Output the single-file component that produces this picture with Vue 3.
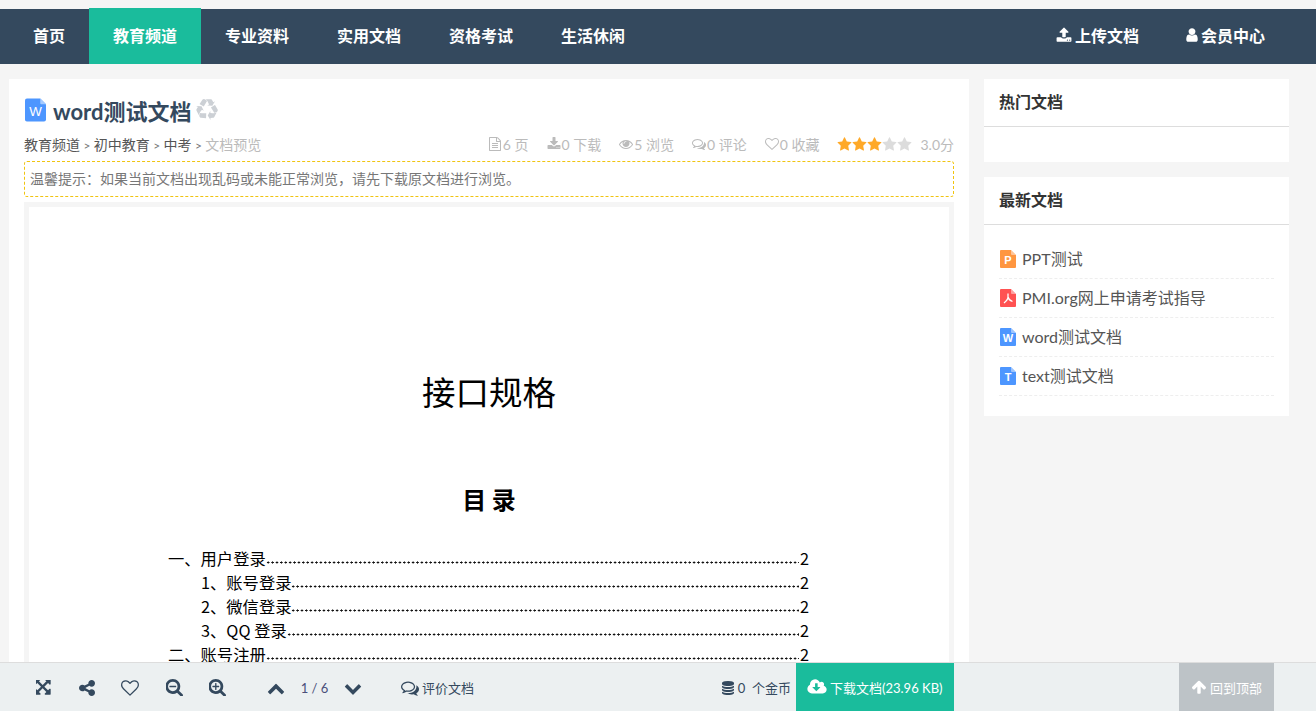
<template>
  <div class="page">
    <nav class="topnav">
      <a v-for="item in navItems" :key="item" class="nav-item" :class="{ 'is-active': item === '教育频道' }">{{ item }}</a>
      <a class="nav-item nav-right">
        <svg class="nav-icon" viewBox="0 0 1792 1792"><path :d="fa.upload" /></svg>上传文档
      </a>
      <a class="nav-item">
        <svg class="nav-icon user" viewBox="256 0 1280 1792"><path :d="fa.user" /></svg>会员中心
      </a>
    </nav>

    <div class="content">
      <main class="main-card">
        <h1 class="doc-title">
          <svg class="title-icon" viewBox="0 0 22 24">
            <path d="M2 0H16L22 6V22A2 2 0 0 1 20 24H2A2 2 0 0 1 0 22V2A2 2 0 0 1 2 0Z" fill="#4d96ff" />
            <path d="M16 0 22 6H17A1 1 0 0 1 16 5Z" fill="#a6cbff" />
            <text x="11" y="18" text-anchor="middle" class="title-letter">W</text>
          </svg>
          <span>word测试文档</span>
          <svg class="recycle" viewBox="0 0 1792 1792" fill="#ccd0d5"><path :d="fa.recycle" /></svg>
        </h1>

        <div class="meta-row">
          <div class="crumbs">
            <span>教育频道</span><i>&gt;</i><span>初中教育</span><i>&gt;</i><span>中考</span><i>&gt;</i><span class="crumb-current">文档预览</span>
          </div>
          <div class="stats">
            <span v-for="stat in stats" :key="stat.label" class="stat">
              <svg class="stat-icon" viewBox="0 0 1792 1792"><path :d="fa[stat.icon]" /></svg>{{ stat.label }}
            </span>
            <span class="stars">
              <svg v-for="n in 5" :key="n" class="star" viewBox="0 0 1792 1792" :fill="n <= 3 ? '#ffa928' : '#dcdcdc'"><path :d="fa.star" /></svg>
            </span>
            <span class="score">3.0分</span>
          </div>
        </div>

        <div class="notice">温馨提示：如果当前文档出现乱码或未能正常浏览，请先下载原文档进行浏览。</div>

        <div class="viewer">
          <div class="sheet">
            <div class="sheet-title">接口规格</div>
            <div class="sheet-sub">目 录</div>
            <div class="toc">
              <div v-for="row in tocRows" :key="row.text" class="toc-row" :class="{ 'is-child': row.child }">
                <span>{{ row.text }}</span>
                <span class="leader"></span>
                <span>2</span>
              </div>
            </div>
          </div>
        </div>
      </main>

      <aside class="sidebar">
        <section class="side-card">
          <h3 class="side-head">热门文档</h3>
          <div class="side-empty"></div>
        </section>
        <section class="side-card">
          <h3 class="side-head">最新文档</h3>
          <ul class="side-list">
            <li v-for="doc in latestDocs" :key="doc.name" class="side-item">
              <svg class="file-icon" viewBox="0 0 16 18">
                <path d="M1 0H11L16 5V17A1 1 0 0 1 15 18H1A1 1 0 0 1 0 17V1A1 1 0 0 1 1 0Z" :fill="doc.color" />
                <path d="M11 0 16 5H12A1 1 0 0 1 11 4Z" fill="#fff" fill-opacity=".45" />
                <path v-if="doc.letter === ''" d="M8 4.500V8C8 10 6.500 12 4 14M8 8C8.500 10.500 10 11.500 12.500 12.500" fill="none" stroke="#fff" stroke-width="1.300" />
                <text v-else x="8" y="13.500" text-anchor="middle" class="file-letter">{{ doc.letter }}</text>
              </svg>
              <span>{{ doc.name }}</span>
            </li>
          </ul>
        </section>
      </aside>
    </div>

    <footer class="toolbar">
      <div class="tool-icons">
        <svg v-for="tool in toolIcons" :key="tool.name" class="tool" :style="{ width: tool.size + 'px', height: tool.size + 'px' }" :viewBox="tool.box"><path :d="fa[tool.name]" /></svg>
      </div>
      <div class="pager">
        <svg class="tool" viewBox="0 0 1792 1792"><path :d="fa.chevronUp" /></svg>
        <span class="page-num">1 / 6</span>
        <svg class="tool" viewBox="0 0 1792 1792"><path :d="fa.chevronDown" /></svg>
      </div>
      <a class="rate">
        <svg class="tool" viewBox="0 0 1792 1792"><path :d="fa.comments" /></svg>评价文档
      </a>
      <div class="coins">
        <svg class="coin-icon" viewBox="128 128 1536 1536"><path :d="fa.database" /></svg>
        <span>0 &nbsp;个金币</span>
      </div>
      <a class="download-btn">
        <svg class="cloud" viewBox="0 0 1920 1792"><path :d="fa.cloudDownload" /></svg>下载文档(23.96 KB)
      </a>
      <a class="top-btn">
        <svg class="arrow-up" viewBox="0 0 1792 1792"><path :d="fa.arrowUp" /></svg>回到顶部
      </a>
    </footer>
  </div>
</template>

<script setup>
const navItems = ['首页', '教育频道', '专业资料', '实用文档', '资格考试', '生活休闲']

const stats = [
  { icon: 'file', label: '6 页' },
  { icon: 'download', label: '0 下载' },
  { icon: 'eye', label: '5 浏览' },
  { icon: 'comments', label: '0 评论' },
  { icon: 'heart', label: '0 收藏' }
]

const tocRows = [
  { text: '一、用户登录' },
  { text: '1、账号登录', child: true },
  { text: '2、微信登录', child: true },
  { text: '3、QQ 登录', child: true },
  { text: '二、账号注册' }
]

const latestDocs = [
  { name: 'PPT测试', letter: 'P', color: '#ff9640' },
  { name: 'PMI.org网上申请考试指导', letter: '', color: '#ff5252' },
  { name: 'word测试文档', letter: 'W', color: '#4d96ff' },
  { name: 'text测试文档', letter: 'T', color: '#4d96ff' }
]

// boxes are cropped to each glyph so the gaps between icons come out even
const toolIcons = [
  { name: 'arrowsAlt', box: '128 128 1536 1536', size: 16 },
  { name: 'shareAlt', box: '128 128 1536 1536', size: 16 },
  { name: 'heart', box: '0 0 1792 1792', size: 18 },
  { name: 'searchMinus', box: '128 128 1600 1600', size: 17 },
  { name: 'searchPlus', box: '128 128 1600 1600', size: 17 }
]

const searchRing = 'zm128 32q0-185-131.500-316.500t-316.500-131.500-316.500 131.500-131.500 316.500 131.500 316.500 316.500 131.500 316.500-131.500 131.500-316.500zm512 832q0 53-37.500 90.500t-90.500 37.500q-54 0-90-38l-343-342q-179 124-399 124-143 0-273.500-55.500t-225-150-150-225-55.500-273.500 55.500-273.500 150-225 225-150 273.500-55.500 273.500 55.500 225 150 150 225 55.500 273.500q0 220-124 399l343 343q37 37 37 90z'

const fa = {
  upload: 'M1344 1472q0-26-19-45t-45-19-45 19-19 45 19 45 45 19 45-19 19-45zm256 0q0-26-19-45t-45-19-45 19-19 45 19 45 45 19 45-19 19-45zm128-224v320q0 40-28 68t-68 28h-1472q-40 0-68-28t-28-68v-320q0-40 28-68t68-28h427q21 56 70.500 92t110.500 36h256q61 0 110.500-36t70.500-92h427q40 0 68 28t28 68zm-325-648q-17 40-59 40h-256v448q0 26-19 45t-45 19h-256q-26 0-45-19t-19-45v-448h-256q-42 0-59-40-17-39 14-69l448-448q18-19 45-19t45 19l448 448q31 30 14 69z',
  user: 'M1536 1399q0 109-62.500 187t-150.500 78h-854q-88 0-150.500-78t-62.500-187q0-85 8.500-160.500t31.500-152 58.500-131 94-89 134.500-34.500q131 128 313 128t313-128q76 0 134.500 34.500t94 89 58.500 131 31.500 152 8.500 160.500zm-256-887q0 159-112.500 271.500t-271.500 112.500-271.500-112.500-112.500-271.500 112.500-271.500 271.500-112.500 271.500 112.500 112.500 271.500z',
  recycle: 'M836 1169l-15 368-2 22-420-29q-36-3-67-31.500t-47-65.500q-11-27-14.500-55t4-65 12-55 21.500-64 19-53q78 12 509 28zm-387-586l180 379-147-92q-63 72-111.500 144.500t-72.500 125-39.500 94.500-18.500 63l-4 21-190-357q-17-26-18-56t6-47l8-18q35-63 114-188l-140-86zm1231 517l-188 359q-12 29-36.500 46.500t-43.500 20.500l-18 4q-71 7-219 12l8 164-230-367 211-362 7 173q170 16 283 5t170-33zm-785-924q-47 63-265 435l-317-187-19-12 225-356q20-31 60-45t80-10q24 2 48.500 12t42 21 41.500 33 36 34.500 36 39.500 32 35zm655 307l212 363q18 37 12.500 76t-27.500 74q-13 20-33 37t-38 28-48.500 22-47 16-51.500 14-46 12q-34-72-265-436l313-195zm-143-226l142-83-220 373-419-20 151-86q-34-89-75-166t-75.500-123.500-64.500-80-47-46.500l-17-13 405 1q31-3 58 10.500t39 28.500l11 15q39 61 112 190z',
  file: 'M1596 380q28 28 48 76t20 88v1152q0 40-28 68t-68 28h-1344q-40 0-68-28t-28-68v-1600q0-40 28-68t68-28h896q40 0 88 20t76 48zm-444-244v376h376q-10-29-22-41l-313-313q-12-12-41-22zm384 1528v-1024h-416q-40 0-68-28t-28-68v-416h-768v1536h1280zm-1024-864q0-14 9-23t23-9h704q14 0 23 9t9 23v64q0 14-9 23t-23 9h-704q-14 0-23-9t-9-23v-64zm736 224q14 0 23 9t9 23v64q0 14-9 23t-23 9h-704q-14 0-23-9t-9-23v-64q0-14 9-23t23-9h704zm0 256q14 0 23 9t9 23v64q0 14-9 23t-23 9h-704q-14 0-23-9t-9-23v-64q0-14 9-23t23-9h704z',
  download: 'M1344 1344q0-26-19-45t-45-19-45 19-19 45 19 45 45 19 45-19 19-45zm256 0q0-26-19-45t-45-19-45 19-19 45 19 45 45 19 45-19 19-45zm128-224v320q0 40-28 68t-68 28h-1472q-40 0-68-28t-28-68v-320q0-40 28-68t68-28h465l135 136q58 56 136 56t136-56l136-136h464q40 0 68 28t28 68zm-325-569q17 41-14 70l-448 448q-18 19-45 19t-45-19l-448-448q-31-29-14-70 17-39 59-39h256v-448q0-26 19-45t45-19h256q26 0 45 19t19 45v448h256q42 0 59 39z',
  eye: 'M1664 960q-152-236-381-353 61 104 61 225 0 185-131.500 316.500t-316.500 131.500-316.500-131.500-131.500-316.500q0-121 61-225-229 117-381 353 133 205 333.500 326.500t434.500 121.500 434.500-121.500 333.500-326.500zm-720-384q0-20-14-34t-34-14q-125 0-214.500 89.500t-89.500 214.500q0 20 14 34t34 14 34-14 14-34q0-86 61-147t147-61q20 0 34-14t14-34zm848 384q0 34-20 69-140 230-376.500 368.500t-499.500 138.500-499.500-139-376.500-368q-20-35-20-69t20-69q140-229 376.500-368t499.500-139 499.500 139 376.500 368q20 35 20 69z',
  comments: 'M704 384q-153 0-286 52t-211.500 141-78.500 191q0 82 53 158t149 132l97 56-35 84q34-20 62-39l44-31 53 10q78 14 153 14 153 0 286-52t211.500-141 78.500-191-78.500-191-211.500-141-286-52zm0-128q191 0 353.500 68.500t256.500 186.500 94 257-94 257-256.500 186.500-353.500 68.500q-86 0-176-16-124 88-278 128-36 9-86 16h-3q-11 0-20.500-8t-11.500-21q-1-3-1-6.500t.5-6.500 2-6l2.500-5 3.500-5.500 4-5 4.500-5 4-4.500q5-6 23-25t26-29.500 22.500-29 25-38.500 20.500-44q-124-72-195-177t-71-224q0-139 94-257t256.500-186.500 353.500-68.500zm822 1169q10 24 20.500 44t25 38.500 22.500 29 26 29.500 23 25q1 1 4 4.500t4.500 5 4 5 3.500 5.500l2.500 5 2 6 .5 6.500-1 6.500q-3 14-13 22t-22 7q-50-7-86-16-154-40-278-128-90 16-176 16-271 0-472-132 58 4 88 4 161 0 309-45t264-129q125-92 192-212t67-254q0-77-23-152 129 71 204 178t75 230q0 120-71 224.500t-195 176.500z',
  heart: 'M1664 596q0-81-21.500-143t-55-98.500-81.500-59.500-94-31-98-8-112 25.500-110.500 64-86.500 72-60 61.500q-18 22-49 22t-49-22q-24-28-60-61.500t-86.500-72-110.500-64-112-25.500-98 8-94 31-81.500 59.500-55 98.500-21.500 143q0 168 187 355l581 560 580-559q188-188 188-356zm128 0q0 221-229 450l-623 600q-18 18-44 18t-44-18l-624-601q-10-8-27.500-26t-55.500-65.500-68-97.500-53.500-121-23.500-138q0-220 127-344t351-124q62 0 126.500 21.500t120 58 95.500 68.500 76 68q36-36 76-68t95.500-68.500 120-58 126.500-21.500q224 0 351 124t127 344z',
  star: 'M1728 647q0 22-26 48l-363 354 86 500q1 7 1 20 0 21-10.500 35.500t-30.500 14.500q-19 0-40-12l-449-236-449 236q-22 12-40 12-21 0-31.500-14.500t-10.500-35.500q0-6 2-20l86-500-364-354q-25-27-25-48 0-37 56-46l502-73 225-455q19-41 49-41t49 41l225 455 502 73q56 9 56 46z',
  arrowsAlt: 'M1283 413l-355 355 355 355 144-144q29-31 70-14 39 17 39 59v448q0 26-19 45t-45 19h-448q-42 0-59-40-17-39 14-69l144-144-355-355-355 355 144 144q31 30 14 69-17 40-59 40h-448q-26 0-45-19t-19-45v-448q0-42 40-59 39-17 69 14l144 144 355-355-355-355-144 144q-19 19-45 19-12 0-24-5-40-17-40-59v-448q0-26 19-45t45-19h448q42 0 59 40 17 39-14 69l-144 144 355 355 355-355-144-144q-31-30-14-69 17-40 59-40h448q26 0 45 19t19 45v448q0 42-39 59-13 5-25 5-26 0-45-19z',
  shareAlt: 'M1344 1024q133 0 226.500 93.500t93.500 226.500-93.500 226.500-226.500 93.500-226.500-93.500-93.500-226.500q0-12 2-34l-360-180q-92 86-218 86-133 0-226.500-93.500t-93.500-226.500 93.500-226.500 226.500-93.500q126 0 218 86l360-180q-2-22-2-34 0-133 93.500-226.500t226.500-93.500 226.500 93.500 93.500 226.500-93.500 226.500-226.500 93.500q-126 0-218-86l-360 180q2 22 2 34t-2 34l360 180q92-86 218-86z',
  searchMinus: 'M1088 800v64q0 13-9.500 22.500t-22.500 9.500h-576q-13 0-22.500-9.500t-9.500-22.500v-64q0-13 9.500-22.500t22.500-9.500h576q13 0 22.500 9.500t9.500 22.500' + searchRing,
  searchPlus: 'M1088 800v64q0 13-9.500 22.500t-22.500 9.500h-224v224q0 13-9.500 22.500t-22.500 9.500h-64q-13 0-22.500-9.500t-9.500-22.500v-224h-224q-13 0-22.500-9.500t-9.500-22.500v-64q0-13 9.500-22.500t22.500-9.500h224v-224q0-13 9.500-22.500t22.500-9.500h64q13 0 22.500 9.500t9.500 22.500v224h224q13 0 22.500 9.500t9.500 22.500' + searchRing,
  chevronUp: 'M1683 1331l-166 165q-19 19-45 19t-45-19l-531-531-531 531q-19 19-45 19t-45-19l-166-165q-19-19-19-45.500t19-45.500l742-741q19-19 45-19t45 19l742 741q19 19 19 45.500t-19 45.500z',
  chevronDown: 'M1683 808l-742 741q-19 19-45 19t-45-19l-742-741q-19-19-19-45.500t19-45.500l166-165q19-19 45-19t45 19l531 531 531-531q19-19 45-19t45 19l166 165q19 19 19 45.500t-19 45.500z',
  database: 'M896 768q237 0 443-43t325-127v170q0 69-103 128t-280 93.500-385 34.500-385-34.500-280-93.500-103-128v-170q119 84 325 127t443 43zm0 768q237 0 443-43t325-127v170q0 69-103 128t-280 93.500-385 34.500-385-34.500-280-93.500-103-128v-170q119 84 325 127t443 43zm0-384q237 0 443-43t325-127v170q0 69-103 128t-280 93.500-385 34.500-385-34.500-280-93.500-103-128v-170q119 84 325 127t443 43zm0-1152q208 0 385 34.500t280 93.500 103 128v128q0 69-103 128t-280 93.500-385 34.500-385-34.500-280-93.500-103-128v-128q0-69 103-128t280-93.500 385-34.500z',
  cloudDownload: 'M1280 928q0-14-9-23t-23-9h-224v-352q0-13-9.500-22.500t-22.500-9.500h-192q-13 0-22.500 9.500t-9.500 22.500v352h-224q-13 0-22.500 9.500t-9.500 22.500q0 14 9 23l352 352q9 9 23 9t23-9l351-351q10-12 10-24zm640 224q0 159-112.500 271.500t-271.500 112.500h-1088q-185 0-316.500-131.500t-131.500-316.500q0-130 70-240t188-165q-2-30-2-43 0-212 150-362t362-150q156 0 285.500 87t188.500 231q71-62 166-62 106 0 181 75t75 181q0 76-41 138 130 31 213.500 135.500t83.500 238.500z',
  arrowUp: 'M1675 971q0 51-37 90l-75 75q-38 38-91 38-54 0-90-38l-294-293v704q0 52-37.500 84.500t-90.500 32.500h-128q-53 0-90.500-32.500t-37.500-84.500v-704l-294 293q-36 38-90 38t-90-38l-75-75q-38-38-38-90 0-53 38-91l651-651q35-37 90-37 54 0 91 37l651 651q37 39 37 91z'
}
</script>

<style>
html,
body {
  margin: 0;
  background: #f5f5f5;
}
</style>

<style scoped>
.page {
  display: flex;
  flex-direction: column;
  height: 100vh;
  overflow: hidden;
  font-family: Lato, "Noto Sans CJK SC", sans-serif;
  font-size: 14px;
  color: #555;
  background: #f5f5f5;
}

/* top bar */
.topnav {
  display: flex;
  flex: 0 0 auto;
  height: 55px;
  margin-top: 9px;
  padding: 0 27px 0 9px;
  background: #34495e;
}

.nav-item {
  display: flex;
  align-items: center;
  box-sizing: border-box;
  height: 55px;
  padding: 0 24px 3px;
  font-size: 16px;
  font-weight: 700;
  color: #fff;
}

.nav-item.is-active {
  height: 56px;
  margin-top: -1px;
  background: #1abc9c;
}

.nav-right {
  margin-left: auto;
  margin-right: -1px;
}

.nav-icon {
  width: 16px;
  height: 16px;
  margin-right: 3px;
  fill: #fff;
}
.nav-icon.user {
  width: 12px;
}

.content {
  display: flex;
  flex: 1 1 0;
  align-items: flex-start;
  gap: 15px;
  min-height: 0;
  padding: 15px 27px 0 9px;
  overflow: hidden;
}

/* main column */
.main-card {
  flex: 0 0 960px;
  box-sizing: border-box;
  padding: 14px 15px 0;
  background: #fff;
}

.doc-title {
  display: flex;
  align-items: center;
  height: 34px;
  margin: 0;
  font-size: 22px;
  font-weight: 700;
  color: #34495e;
}

.title-icon {
  width: 21px;
  height: 24px;
  margin: 0 7px 0 1px;
}

.title-letter {
  fill: #fff;
  font-family: "Liberation Sans", sans-serif;
  font-size: 14px;
  font-weight: 400;
}

.recycle {
  width: 22px;
  height: 22px;
  margin-left: 4px;
}

.meta-row {
  display: flex;
  justify-content: space-between;
  align-items: center;
  height: 20px;
  margin-top: 7px;
}

.crumbs i {
  margin: 0 3.400px;
  font-style: normal;
  font-size: 12px;
  color: #777;
}
.crumb-current {
  color: #bbb;
}

.stats {
  display: flex;
  align-items: center;
  color: #bbb;
}

.stat {
  display: flex;
  align-items: center;
  margin-right: 18px;
}

.stat-icon {
  width: 14px;
  height: 14px;
  margin-right: 1px;
  fill: #bbb;
}

.stars {
  display: flex;
}
.star {
  width: 15px;
  height: 15px;
}

.score {
  margin-left: 8px;
}

.notice {
  box-sizing: border-box;
  height: 36px;
  margin-top: 7px;
  padding: 0 5px;
  line-height: 34px;
  border: 1px dashed #f1c40f;
  border-radius: 3px;
  color: #777;
}

.viewer {
  margin-top: 5px;
  padding: 5px 5px 0;
  background: #f5f5f5;
}

.sheet {
  height: 560px;
  background: #fff;
  color: #000;
  font-family: "Noto Sans CJK SC", sans-serif;
  text-align: center;
}

.sheet-title {
  padding-top: 159px;
  font-size: 33.500px;
  line-height: 50px;
}

.sheet-sub {
  margin-top: 65px;
  font-size: 24px;
  font-weight: 700;
  line-height: 36px;
}

.toc {
  width: 641px;
  margin: 29px 0 0 139px;
  font-size: 16.300px;
  text-align: left;
}

.toc-row {
  display: flex;
  height: 24px;
  line-height: 24px;
  white-space: nowrap;
}
.toc-row.is-child {
  padding-left: 33px;
}

/* dot leader between a heading and its page number */
.leader {
  flex: 1 1 0;
  min-width: 0;
  height: 3px;
  margin: 15px 1px 0 0;
  background-image: radial-gradient(circle, #111 0.9px, transparent 1.200px);
  background-size: 4.400px 3px;
}

/* sidebar */
.sidebar {
  display: flex;
  flex: 0 0 305px;
  flex-direction: column;
  gap: 15px;
}

.side-card {
  background: #fff;
}

.side-head {
  height: 47px;
  margin: 0;
  padding: 0 15px;
  font-size: 16px;
  font-weight: 700;
  line-height: 46px;
  color: #333;
  border-bottom: 1px solid #ddd;
}

.side-empty {
  height: 35px;
}

.side-list {
  margin: 0;
  padding: 15px 15px 20px;
  list-style: none;
}

.side-item {
  display: flex;
  align-items: center;
  height: 39px;
  box-sizing: border-box;
  padding-bottom: 1px;
  font-size: 16px;
  color: #555;
  border-bottom: 1px dashed #eee;
}

.side-item span {
  margin-top: -2px;
}

.file-icon {
  width: 16px;
  height: 18px;
  margin: 0 6px 0 1px;
}

.file-letter {
  fill: #fff;
  font-family: "Liberation Sans", sans-serif;
  font-size: 11px;
  font-weight: 700;
}

/* bottom toolbar */
.toolbar {
  display: flex;
  flex: 0 0 49px;
  box-sizing: border-box;
  align-items: center;
  height: 49px;
  padding-left: 22px;
  padding-top: 1px;
  font-size: 13px;
  color: #34495e;
  background: #ecf0f1;
  border-top: 1px solid #ddd;
}

.tool-icons {
  display: flex;
  align-items: center;
  gap: 26.500px;
  width: 218px;
  padding-left: 14px;
  box-sizing: border-box;
}

.tool {
  width: 18px;
  height: 18px;
  fill: #34495e;
}

.pager {
  display: flex;
  align-items: center;
  margin-left: 27px;
}

.page-num {
  width: 59px;
  text-align: center;
  color: #4a4f7a;
}

.rate {
  display: flex;
  align-items: center;
  gap: 3px;
  margin-left: 39px;
}

.coins {
  display: flex;
  align-items: center;
  gap: 4px;
  margin-left: auto;
  margin-right: 5px;
}
.coin-icon {
  width: 12px;
  height: 14px;
  fill: #34495e;
}

.download-btn {
  display: flex;
  align-items: center;
  align-self: stretch;
  gap: 3px;
  width: 158px;
  box-sizing: border-box;
  margin-top: -1px;
  padding-left: 11px;
  color: #fff;
  background: #1abc9c;
}

.cloud {
  width: 20px;
  height: 18px;
  fill: #fff;
}

.top-btn {
  display: flex;
  align-items: center;
  align-self: stretch;
  width: 95px;
  box-sizing: border-box;
  margin: -1px 42px 0 225px;
  padding-left: 12px;
  color: #fff;
  background: #bdc3c7;
}

.arrow-up {
  width: 16px;
  height: 16px;
  margin-right: 3px;
  fill: #fff;
}
</style>
